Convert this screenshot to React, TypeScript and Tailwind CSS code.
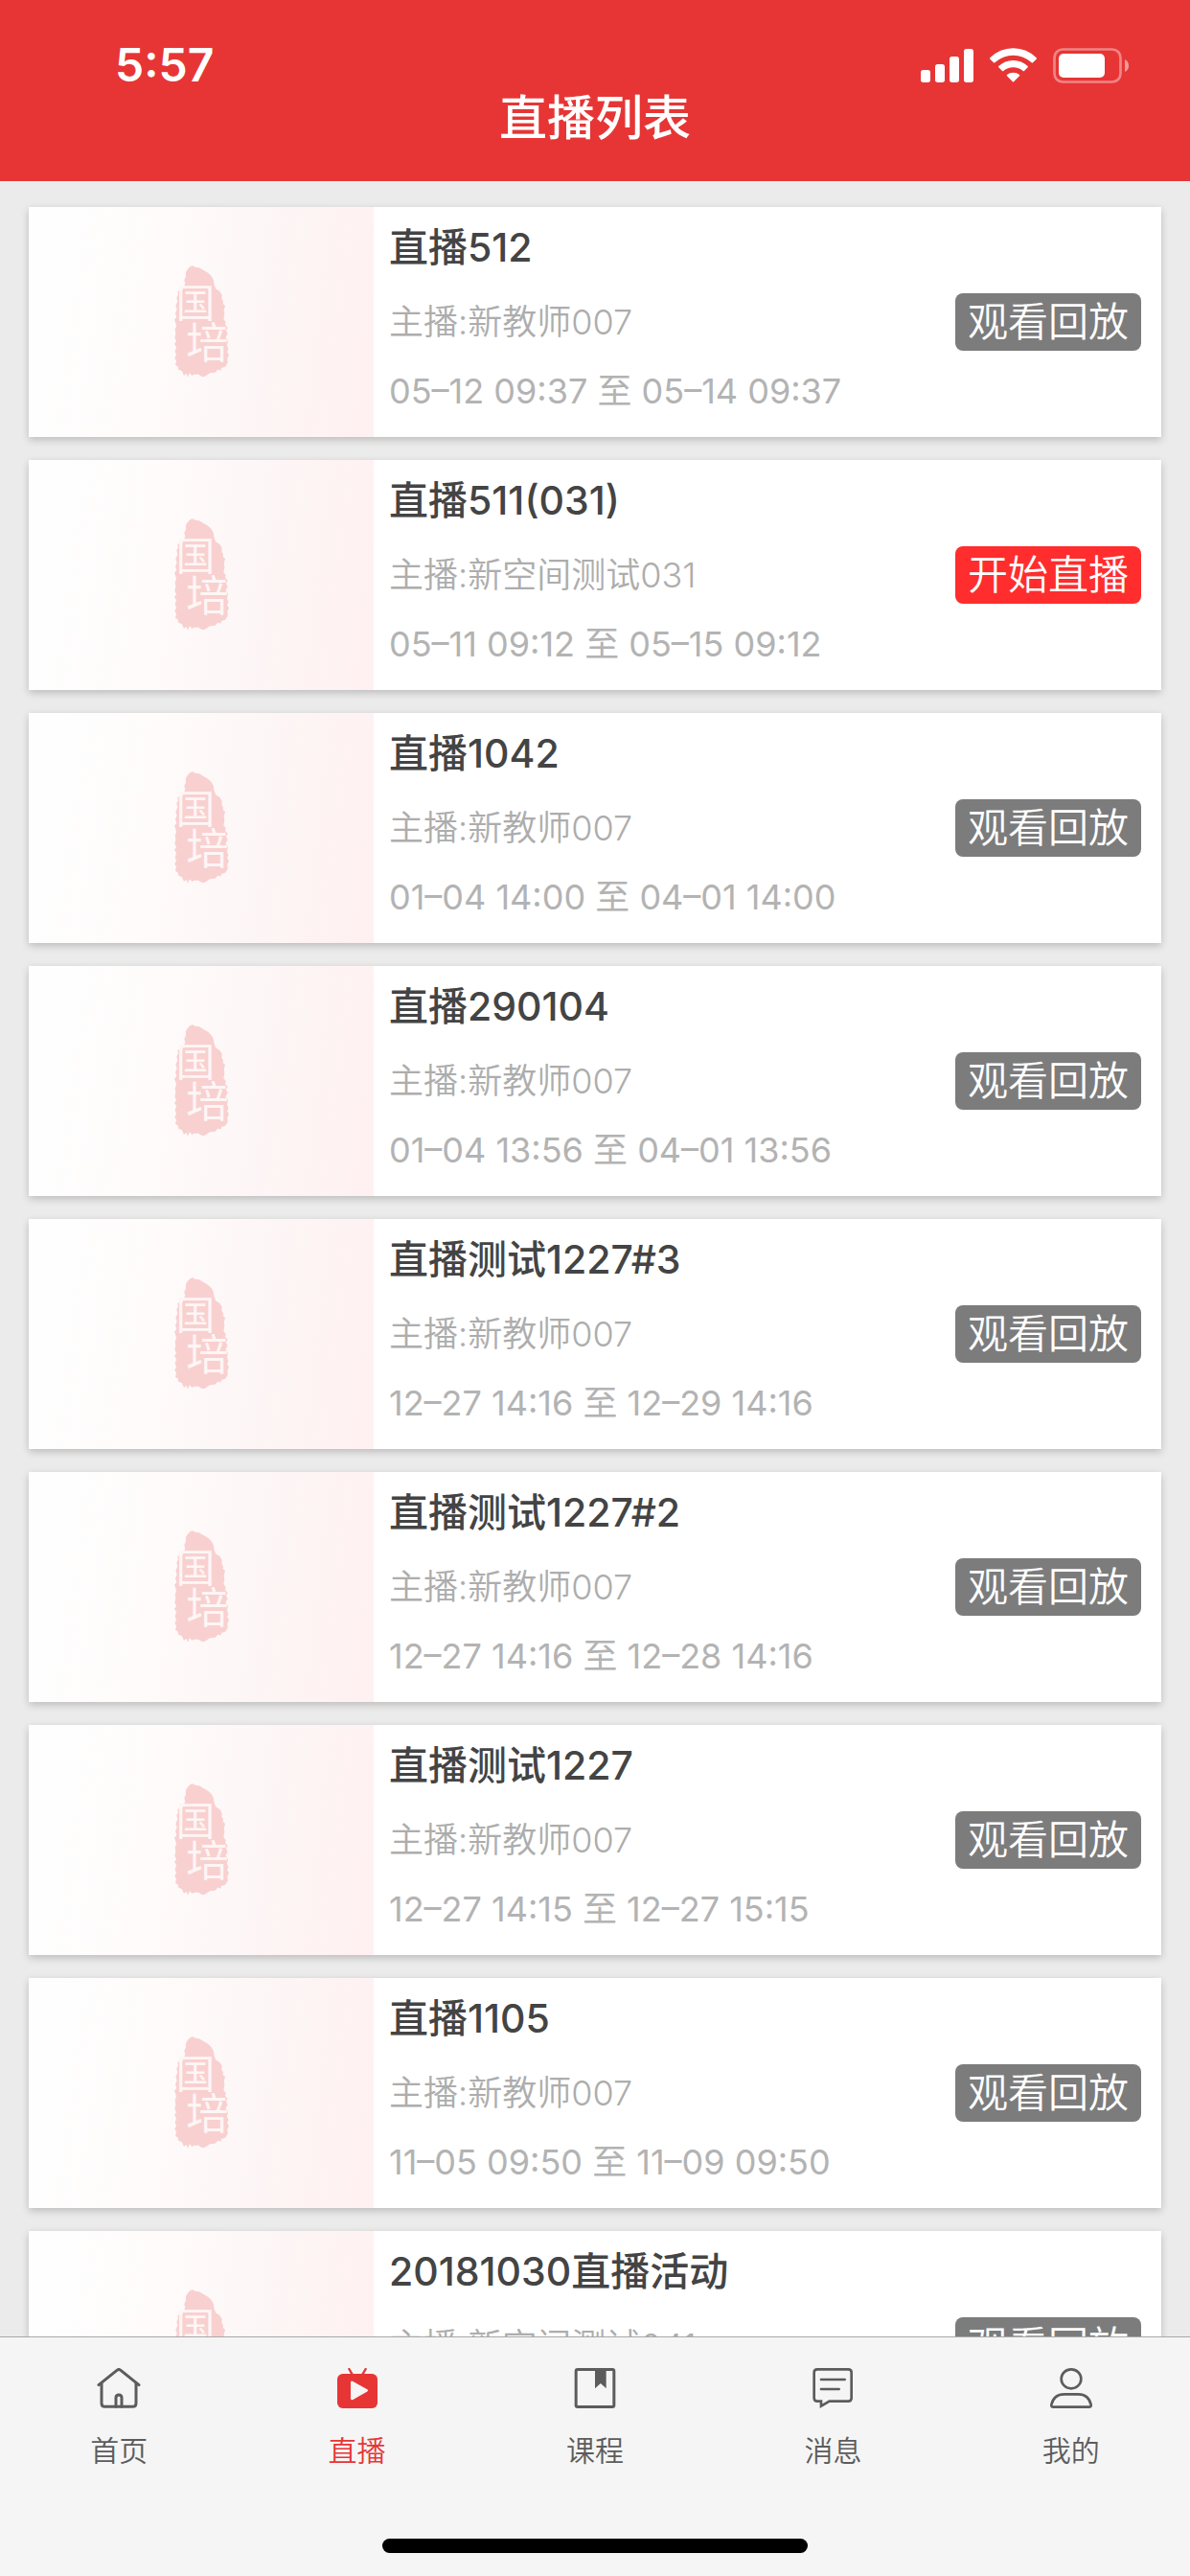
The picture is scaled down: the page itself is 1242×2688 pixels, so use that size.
import React, { useState } from 'react';

type Live = {
  id: number;
  title: string;
  host: string;
  time?: string;
  living?: boolean;
};

const lives: Live[] = [
  { id: 1, title: '直播512', host: '新教师007', time: '05–12 09:37 至 05–14 09:37' },
  { id: 2, title: '直播511(031)', host: '新空间测试031', time: '05–11 09:12 至 05–15 09:12', living: true },
  { id: 3, title: '直播1042', host: '新教师007', time: '01–04 14:00 至 04–01 14:00' },
  { id: 4, title: '直播290104', host: '新教师007', time: '01–04 13:56 至 04–01 13:56' },
  { id: 5, title: '直播测试1227#3', host: '新教师007', time: '12–27 14:16 至 12–29 14:16' },
  { id: 6, title: '直播测试1227#2', host: '新教师007', time: '12–27 14:16 至 12–28 14:16' },
  { id: 7, title: '直播测试1227', host: '新教师007', time: '12–27 14:15 至 12–27 15:15' },
  { id: 8, title: '直播1105', host: '新教师007', time: '11–05 09:50 至 11–09 09:50' },
  { id: 9, title: '20181030直播活动', host: '新空间测试041' },
];

const HomeIcon = () => (
  <svg viewBox="0 0 144 126" className="h-[42px] w-12" fill="none" stroke="currentColor" strokeWidth="9" strokeLinecap="round" strokeLinejoin="round">
    <path d="M9 53 L66 7 Q72 2 78 7 L135 53" />
    <path d="M18 48 V110 Q18 121 29 121 H115 Q126 121 126 110 V48" />
    <path d="M63 121 V93 Q63 84 72 84 Q81 84 81 93 V121" />
  </svg>
);

const LiveIcon = () => (
  <svg viewBox="0 0 144 126" className="h-[42px] w-12" fill="none">
    <path d="M46 3 L56 20 M98 3 L88 20" stroke="currentColor" strokeWidth="7" strokeLinecap="round" />
    <rect x="9" y="18" width="126" height="108" rx="17" fill="currentColor" />
    <path d="M55 45 V96 L101 70 Z" fill="#f5f5f5" stroke="#f5f5f5" strokeWidth="8" strokeLinejoin="round" />
  </svg>
);

const CourseIcon = () => (
  <svg viewBox="0 0 144 126" className="h-[42px] w-12" fill="none">
    <rect x="12.5" y="4.5" width="119" height="117" rx="5" stroke="currentColor" strokeWidth="9" />
    <path d="M72 4 H107 V64 L89.5 48 L72 64 Z" fill="currentColor" />
  </svg>
);

const MessageIcon = () => (
  <svg viewBox="0 0 144 126" className="h-[42px] w-12" fill="none" stroke="currentColor" strokeWidth="8" strokeLinecap="round">
    <path d="M24 4 H121 Q131 4 131 14 V94 Q131 104 121 104 H62 L36 119 V104 H24 Q14 104 14 94 V14 Q14 4 24 4 Z" />
    <path d="M36 36 H110 M36 66 H92" />
  </svg>
);

const MineIcon = () => (
  <svg viewBox="0 0 144 126" className="h-[42px] w-12" fill="none" stroke="currentColor" strokeWidth="8">
    <ellipse cx="72" cy="34" rx="31" ry="30" />
    <path d="M50 82 H94 C118 82 130 97 134 115 Q135 122 128 122 H16 Q9 122 10 115 C14 97 26 82 50 82 Z" />
  </svg>
);

const tabs = [
  { name: '首页', Icon: HomeIcon },
  { name: '直播', Icon: LiveIcon },
  { name: '课程', Icon: CourseIcon },
  { name: '消息', Icon: MessageIcon },
  { name: '我的', Icon: MineIcon },
];

function Cover() {
  return (
    <div className="flex w-[360px] shrink-0 items-center justify-center bg-[linear-gradient(98deg,#fefefe_8%,#fffbfa_40%,#fdf7f7_60%,#fff1f1_95%)]">
      <svg viewBox="0 0 172 354" className="h-[118px] w-[57px] overflow-visible" aria-hidden="true">
        <path
          fill="#f9d0d0"
          d="M58 0 L66 4 L78 6 L92 14 L106 22 L117 33 L123 44 L125 58 L130 72 L142 80 L150 92 L149 104 L154 112 L153 120 L160 126 L156 140 L158 152 L155 168 L162 178 L160 186 L168 194 L163 204 L168 214 L161 226 L169 236 L166 252 L170 262 L166 272 L172 280 L167 292 L168 306 L160 318 L148 322 L146 330 L138 326 L128 336 L112 338 L96 348 L88 350 L76 342 L62 342 L56 346 L48 338 L42 351 L38 340 L30 346 L24 332 L12 326 L12 318 L3 312 L6 300 L1 290 L6 280 L2 270 L6 256 L0 246 L6 238 L1 226 L4 214 L2 200 L6 190 L3 178 L0 170 L7 162 L3 150 L8 138 L4 126 L10 112 L7 100 L12 90 L10 80 L26 76 L30 64 L34 56 L31 44 L36 34 L36 20 L42 10 L50 2 Z"
        />
        <text x="66" y="161" textAnchor="middle" fontSize="122" fontWeight="400" fontFamily="'Noto Sans CJK SC', sans-serif" fill="#fdf6f5">国</text>
        <text x="104" y="292" textAnchor="middle" fontSize="134" fontWeight="400" fontFamily="'Noto Sans CJK SC', sans-serif" fill="#fdf6f5">培</text>
      </svg>
    </div>
  );
}

function StatusBar() {
  return (
    <div className="flex h-12 items-center justify-between pr-16 pl-[120px]">
      <span className="text-5xl leading-[48px] font-semibold">5:57</span>
      <div className="flex items-center gap-[17px]">
        <svg viewBox="0 0 165 105" className="h-[35px] w-[55px]" fill="currentColor">
          <rect x="0" y="66" width="30" height="39" rx="8" />
          <rect x="45" y="48" width="30" height="57" rx="8" />
          <rect x="90" y="24" width="30" height="81" rx="8" />
          <rect x="135" y="0" width="30" height="105" rx="8" />
        </svg>
        <svg viewBox="0 0 147 108" className="h-9 w-[49px]" fill="currentColor">
          <path d="M1 31 Q31 1 73.5 1 Q116 1 146 31 Q148 33 146 35 L135 46 Q133 48 131 46 Q106 23 73.5 23 Q41 23 16 46 Q14 48 12 46 L1 35 Q-1 33 1 31 Z" />
          <path d="M28 57 Q47 39 73.5 39 Q100 39 119 57 Q121 59 119 61 L108 72 Q106 74 104 72 Q91 61 73.5 61 Q56 61 43 72 Q41 74 39 72 L28 61 Q26 59 28 57 Z" />
          <path d="M54 84 Q62 77 73.5 77 Q85 77 93 84 Q95 86 93 88 L75 106 Q73.5 108 72 106 L54 88 Q52 86 54 84 Z" />
        </svg>
        <svg viewBox="0 0 237 111" className="h-[37px] w-[79px]">
          <rect x="4.5" y="4.5" width="207" height="102" rx="26" fill="none" stroke="white" strokeOpacity="0.4" strokeWidth="8" />
          <rect x="18" y="18" width="144" height="75" rx="15" fill="white" />
          <path d="M225 36 Q237 42 237 56 Q237 69 225 75 Z" fill="white" fillOpacity="0.5" />
        </svg>
      </div>
    </div>
  );
}

export default function App() {
  const [active, setActive] = useState('直播');

  return (
    <div className="flex h-screen flex-col bg-[#ebebeb] font-['Inter','Noto_Sans_CJK_SC',sans-serif]">
      <header className="shrink-0 bg-[#e73535] pt-11 pb-[35px] text-white">
        <StatusBar />
        <h1 className="text-center text-[50px] leading-[62px] font-medium">直播列表</h1>
      </header>

      <main className="min-h-0 flex-1 overflow-y-auto px-[30px] pt-[27px] [scrollbar-width:none]">
        <ul className="flex flex-col gap-6">
          {lives.map((live) => (
            <li key={live.id} className="flex min-h-[240px] bg-white shadow-[0_3px_8px_rgba(0,0,0,0.2)]">
              <Cover />
              <div className="min-w-0 flex-1 pt-3 pb-6 pl-4">
                <h2 className="text-[41px] leading-[60px] font-medium text-[#444]">{live.title}</h2>
                <p className="mt-6 text-4xl leading-[48px] font-[350] text-[#adadad]">主播:{live.host}</p>
                {live.time && <p className="mt-6 text-4xl leading-[48px] text-[#b3b3b3]">{live.time}</p>}
              </div>
              <button
                type="button"
                className={`mr-[21px] shrink-0 self-center rounded-lg px-[13px] text-[42px] leading-[60px] font-[350] text-white ${
                  live.living ? 'bg-[#ff2d2d]' : 'bg-[#7c7c7c]'
                }`}
              >
                {live.living ? '开始直播' : '观看回放'}
              </button>
            </li>
          ))}
        </ul>
      </main>

      <nav className="shrink-0 border-t border-[#a8a8a8] bg-[#f5f5f5] pt-8 pb-6">
        <div className="flex">
          {tabs.map(({ name, Icon }) => (
            <button
              key={name}
              type="button"
              onClick={() => setActive(name)}
              className={`flex flex-1 flex-col items-center gap-6 ${active === name ? 'text-[#e73535]' : 'text-[#5c5c5c]'}`}
            >
              <Icon />
              <span className="text-3xl leading-10 font-[350]">{name}</span>
            </button>
          ))}
        </div>
        <div className="mx-auto mt-[72px] h-[15px] w-[444px] rounded-full bg-black" />
      </nav>
    </div>
  );
}
